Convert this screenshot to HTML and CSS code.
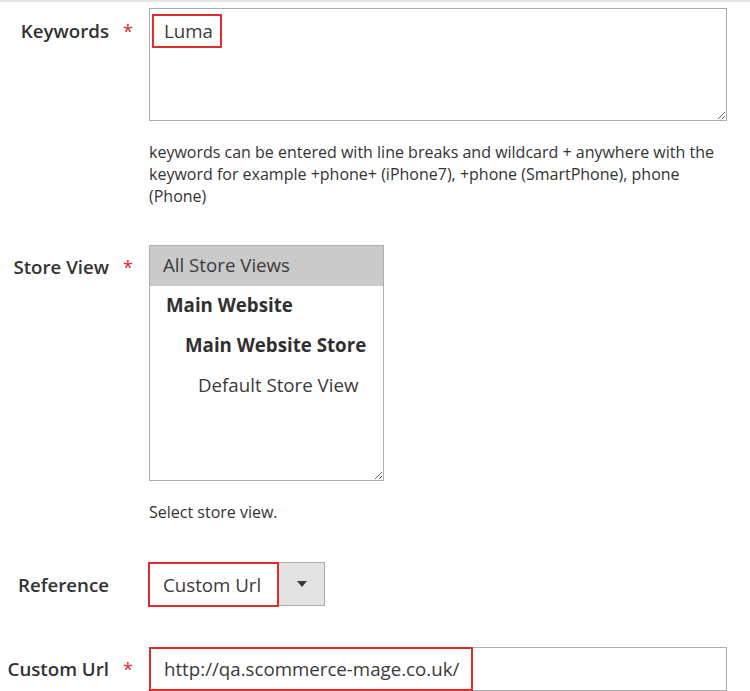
FILE: index.html
```html
<!DOCTYPE html>
<html>
<head>
<meta charset="utf-8">
<link rel="stylesheet" href="styles.css">
</head>
<body>
<div class="page">
  <div class="row row-keywords">
    <div class="label">Keywords</div>
    <div class="req">*</div>
    <div class="control">
      <div class="textarea"><span class="mark mark-luma">Luma</span></div>
      <div class="note">keywords can be entered with line breaks and wildcard + anywhere with the keyword for example +phone+ (iPhone7), +phone (SmartPhone), phone (Phone)</div>
    </div>
  </div>

  <div class="row row-store">
    <div class="label">Store View</div>
    <div class="req">*</div>
    <div class="control">
      <div class="multiselect">
        <div class="opt opt-selected">All Store Views</div>
        <div class="opt opt-website">Main Website</div>
        <div class="opt opt-store">Main Website Store</div>
        <div class="opt opt-view">Default Store View</div>
      </div>
      <div class="note note-store">Select store view.</div>
    </div>
  </div>

  <div class="row row-reference">
    <div class="label">Reference</div>
    <div class="req"></div>
    <div class="control">
      <div class="select">
        <div class="select-value mark">Custom Url</div>
        <div class="select-btn"><span class="caret"></span></div>
      </div>
    </div>
  </div>

  <div class="row row-url">
    <div class="label">Custom Url</div>
    <div class="req">*</div>
    <div class="control">
      <div class="input"><span class="input-value mark">http://qa.scommerce-mage.co.uk/</span></div>
    </div>
  </div>
</div>
</body>
</html>
```

FILE: styles.css
```css
html, body {
  margin: 0;
  padding: 0;
  background: #ffffff;
}
body {
  font-family: "Open Sans", "Liberation Sans", sans-serif;
  color: #303030;
  width: 750px;
  height: 691px;
  overflow: hidden;
}
.page {
  border-top: 2px solid #e6e6e6;
}
.row {
  display: grid;
  grid-template-columns: 109px 40px 578px;
  align-items: start;
}
.label {
  text-align: right;
  font-size: 18.7px;
  font-weight: 600;
  color: #333333;
  line-height: 24px;
  white-space: nowrap;
}
.req {
  font-size: 18px;
  line-height: 24px;
  color: #e22626;
  padding-left: 14px;
}
.control {
  display: flex;
  flex-direction: column;
  align-items: flex-start;
}

/* keywords */
.row-keywords { margin-top: 6px; }
.row-keywords .label,
.row-keywords .req { margin-top: 11px; }
.textarea {
  box-sizing: border-box;
  width: 578px;
  height: 113px;
  border: 1px solid #adadad;
  padding: 5px 0 0 2px;
  resize: both;
  overflow: hidden;
  font-size: 18.7px;
  color: #3a3a3a;
}
.mark {
  border: 2px solid #e22b2b;
}
.mark-luma {
  display: inline-block;
  box-sizing: border-box;
  width: 70px;
  height: 34px;
  padding: 0 0 0 10px;
  line-height: 30px;
}
.note {
  margin-top: 20px;
  font-size: 16px;
  line-height: 22px;
  color: #333333;
  width: 580px;
}

/* store view */
.row-store { margin-top: 38px; }
.row-store .label,
.row-store .req { margin-top: 10px; }
.multiselect {
  box-sizing: border-box;
  width: 235px;
  height: 236px;
  border: 1px solid #adadad;
  resize: both;
  overflow: hidden;
  font-size: 18.7px;
}
.opt {
  height: 40px;
  line-height: 38px;
  white-space: nowrap;
}
.opt-selected {
  background: #cacaca;
  padding-left: 13px;
  color: #3a3a3a;
}
.opt-website {
  font-weight: 700;
  padding-left: 16px;
}
.opt-store {
  font-weight: 700;
  padding-left: 35px;
}
.opt-view {
  padding-left: 48px;
  color: #3a3a3a;
}
.note-store {
  margin-top: 20px;
}

/* reference */
.row-reference { margin-top: 39px; }
.row-reference .label { margin-top: 11px; }
.select {
  display: flex;
  height: 45px;
  margin-left: -1px;
}
.select-value {
  box-sizing: border-box;
  width: 131px;
  height: 45px;
  padding-left: 13px;
  font-size: 18.7px;
  line-height: 41px;
  color: #3a3a3a;
}
.select-btn {
  box-sizing: border-box;
  width: 46px;
  height: 44px;
  background: #e3e3e3;
  border: 1px solid #adadad;
  border-left: none;
  display: flex;
  align-items: center;
  justify-content: center;
}
.caret {
  width: 0;
  height: 0;
  border-left: 5px solid transparent;
  border-right: 5px solid transparent;
  border-top: 6px solid #41362f;
}

/* custom url */
.row-url { margin-top: 40px; }
.row-url .label,
.row-url .req { margin-top: 10px; }
.input {
  box-sizing: border-box;
  width: 578px;
  height: 44px;
  border: 1px solid #adadad;
  display: flex;
}
.input-value {
  box-sizing: border-box;
  height: 44px;
  margin: -1px 0 0 -1px;
  width: 324px;
  padding-left: 13px;
  font-size: 18.7px;
  line-height: 40px;
  color: #3a3a3a;
}
```
